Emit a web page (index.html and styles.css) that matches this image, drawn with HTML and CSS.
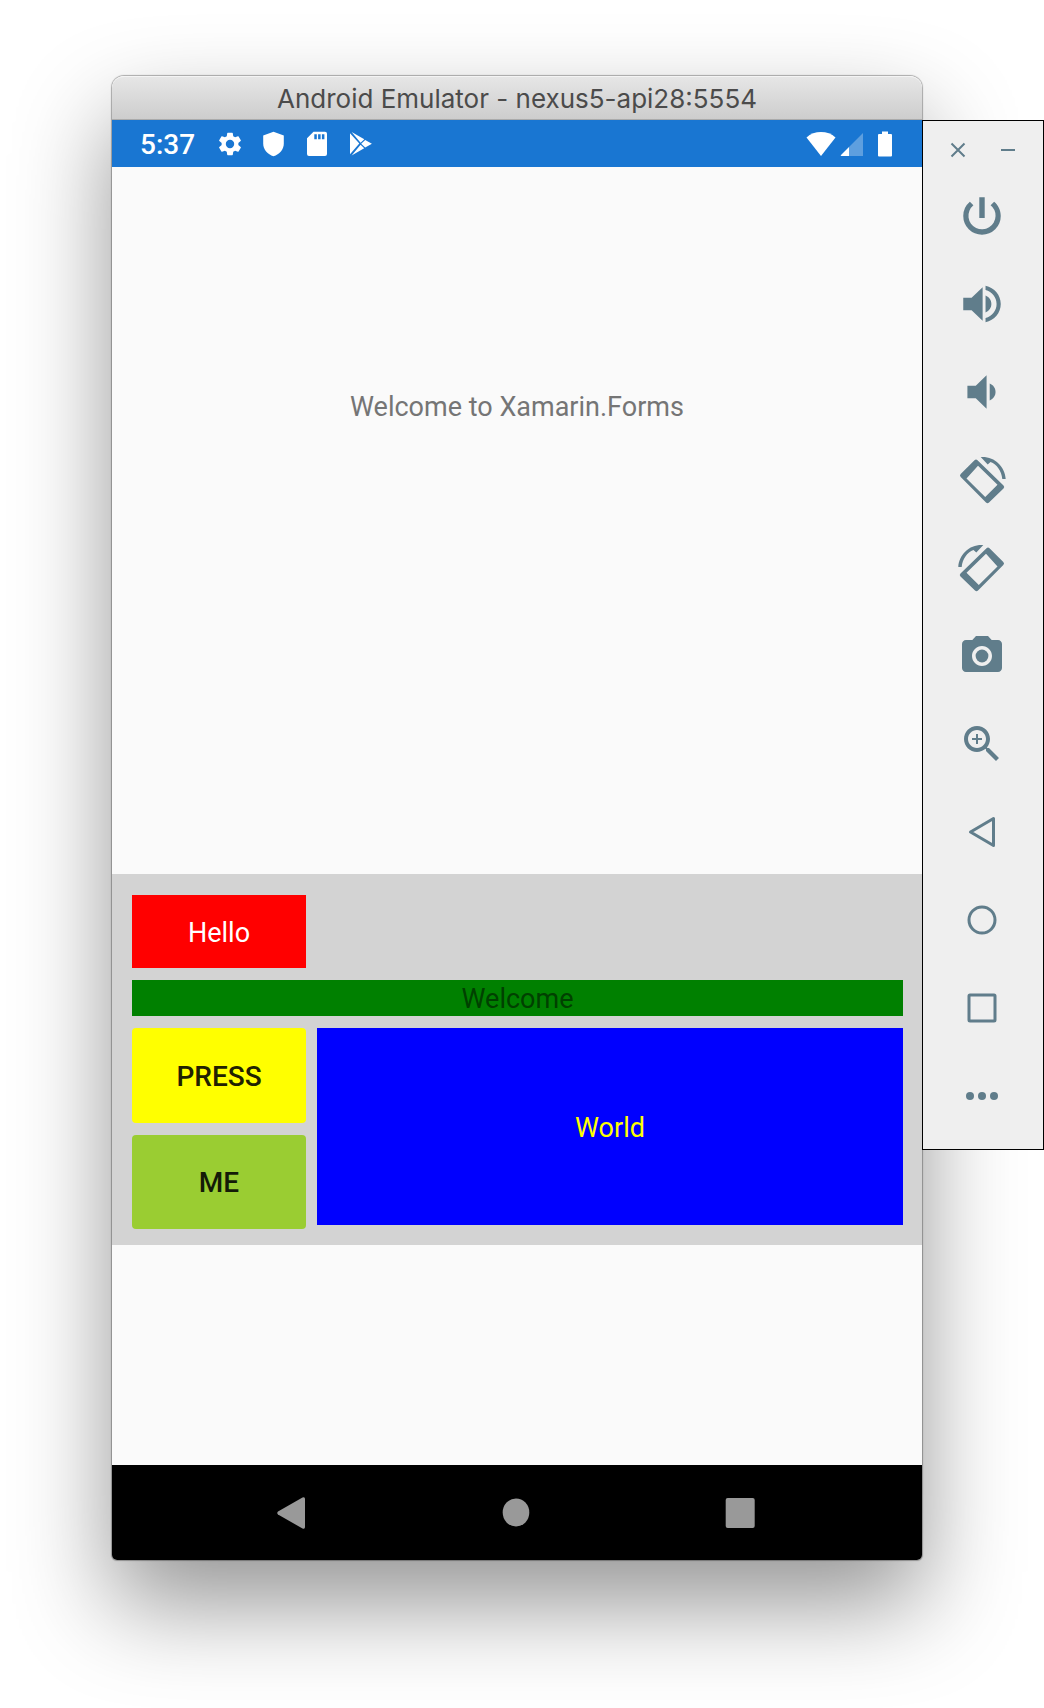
FILE: index.html
```html
<!DOCTYPE html>
<html lang="en">
<head>
<meta charset="utf-8">
<meta name="viewport" content="width=device-width, initial-scale=1">
<title>Android Emulator - nexus5-api28:5554</title>
<link rel="stylesheet" href="styles.css">
</head>
<body>
<main class="stage">
  <section class="window">
    <header class="titlebar"><h1 class="title">Android Emulator - nexus5-api28:5554</h1></header>

    <div class="statusbar">
      <span class="clock">5:37</span>
      <div class="notifications">
        <svg class="status-icon" viewBox="0 0 24 24"><path d="M19.14 12.94c.04-.3.06-.61.06-.94 0-.32-.02-.64-.07-.94l2.03-1.58c.18-.14.23-.41.12-.61l-1.92-3.32c-.12-.22-.37-.29-.59-.22l-2.39.96c-.5-.38-1.03-.7-1.62-.94l-.36-2.54c-.04-.24-.24-.41-.48-.41h-3.84c-.24 0-.43.17-.47.41l-.36 2.54c-.59.24-1.13.57-1.62.94l-2.39-.96c-.22-.08-.47 0-.59.22L2.74 8.87c-.12.21-.08.47.12.61l2.03 1.58c-.05.3-.09.63-.09.94s.02.64.07.94l-2.03 1.58c-.18.14-.23.41-.12.61l1.92 3.32c.12.22.37.29.59.22l2.39-.96c.5.38 1.03.7 1.62.94l.36 2.54c.05.24.24.41.48.41h3.84c.24 0 .44-.17.47-.41l.36-2.54c.59-.24 1.13-.56 1.62-.94l2.39.96c.22.08.47 0 .59-.22l1.92-3.32c.12-.22.07-.47-.12-.61l-2.01-1.58zM12 15.6A3.6 3.6 0 1 1 12 8.4a3.6 3.6 0 0 1 0 7.2z"/></svg>
        <svg class="status-icon" viewBox="0 0 28 28"><path d="M14.500 1.700 24.800 5.500V13.500C24.800 19.500 20.500 24.300 14.500 26.300 8.500 24.300 4.200 19.500 4.200 13.500V5.500Z"/></svg>
        <svg class="status-icon" viewBox="0 0 28 28"><path fill-rule="evenodd" d="M11.500 1.700H23Q25 1.700 25 3.700V24Q25 26 23 26H7Q5 26 5 24V8.200ZM12.300 4.200V9.200H14.800V4.200ZM16.100 4.200V9.200H18.600V4.200ZM19.900 4.200V9.200H22.400V4.200Z"/></svg>
        <svg class="status-icon" viewBox="0 0 28 28"><path d="M5 3.300 14.300 13.600 5 24.200ZM6.600 2 19.300 9.300 15.600 12.800ZM6.600 25.600 15.600 14.800 19.200 18.200ZM20.200 9.900 26.900 13.800 20.200 17.600 16.200 13.800Z"/></svg>
      </div>
      <div class="system">
        <svg class="wifi" viewBox="0 0 30 28"><path d="M15 26 .500 7.500C8 .200 22 .200 29.500 7.500Z"/></svg>
        <svg class="signal" viewBox="0 0 24 28"><path fill-opacity=".3" d="M23 3V26H9V17Z"/><path d="M9 17V26H1.500Q0 26 1 25Z"/></svg>
        <svg class="battery" viewBox="0 0 14 28"><path d="M4 1.500H10V4H13Q14 4 14 5V25.500Q14 26.500 13 26.500H1Q0 26.500 0 25.500V5Q0 4 1 4H4Z"/></svg>
      </div>
    </div>

    <div class="app">
      <p class="greeting">Welcome to Xamarin.Forms</p>
      <div class="panel">
        <p class="cell hello">Hello</p>
        <p class="cell welcome">Welcome</p>
        <button class="cell press" type="button">PRESS</button>
        <button class="cell me" type="button">ME</button>
        <p class="cell world">World</p>
      </div>
    </div>

    <nav class="navbar" aria-label="System navigation">
      <button class="nav-button" type="button" aria-label="Back"><svg viewBox="0 0 32 32"><path d="M25.500 .500Q28 -.500 28 2V30Q28 32.500 25.500 31.500L1 17.500Q-.500 16 1 14.500Z"/></svg></button>
      <button class="nav-button" type="button" aria-label="Home"><svg viewBox="0 0 32 32"><ellipse cx="15" cy="15.500" rx="13.300" ry="14"/></svg></button>
      <button class="nav-button" type="button" aria-label="Overview"><svg viewBox="0 0 32 32"><rect x=".700" y="1" width="29" height="30" rx="2"/></svg></button>
    </nav>
  </section>

  <aside class="toolbar" aria-label="Emulator controls">
    <div class="window-controls">
      <button class="control" type="button" aria-label="Close"><svg viewBox="0 0 16 16"><path class="line thin" d="M1.500 1.500 14.500 14.500M14.500 1.500 1.500 14.500"/></svg></button>
      <button class="control" type="button" aria-label="Minimize"><svg viewBox="0 0 16 16"><path class="line thin" d="M1 8H15"/></svg></button>
    </div>
    <button class="tool" type="button" aria-label="Power"><svg class="large" viewBox="0 0 24 24"><path d="M13.300 3h-2.600v10h2.600V3zm4.530 2.170l-1.700 1.700A6.400 6.400 0 0 1 18.500 12a6.500 6.500 0 1 1-10.630-5.130l-1.700-1.700A8.940 8.940 0 0 0 3 12a9 9 0 0 0 18 0c0-2.740-1.230-5.180-3.170-6.830z"/></svg></button>
    <button class="tool" type="button" aria-label="Volume up"><svg class="large" viewBox="0 0 24 24"><path d="M3 9v6h4l5.300 5V4L7 9H3zm13.500 3c0-1.770-1.020-3.290-2.800-4.030v8.050c1.780-.730 2.800-2.250 2.800-4.020zM13.700 3.230v2.060c3.190.860 5.300 3.540 5.300 6.710s-2.110 5.850-5.300 6.710v2.060c4.310-.910 7.300-4.490 7.300-8.770s-2.990-7.860-7.300-8.770z"/></svg></button>
    <button class="tool" type="button" aria-label="Volume down"><svg class="large" viewBox="0 0 24 24"><path d="M18.500 12c0-1.770-1.020-3.290-2.800-4.030v8.050c1.780-.730 2.800-2.250 2.800-4.020zM5 9v6h4l5.200 5V4L9 9H5z"/></svg></button>
    <button class="tool" type="button" aria-label="Rotate left"><svg viewBox="0 0 48 48"><path fill-rule="evenodd" d="M2.700 18 16.500 4.200Q18 2.700 19.500 4.200L45.500 29.500Q47 31 45.500 32.500L31 46.500Q29.500 48 28 46.500L2.700 21Q1.200 19.500 2.700 18ZM8.500 22.500 27.200 41 39.500 28.700 20 9.800Z"/><path d="M22.700 1C36 0 47 10 47.700 23H44.300C43.500 15 39 8.500 32.500 6L29.700 8.500Z"/></svg></button>
    <button class="tool" type="button" aria-label="Rotate right"><svg viewBox="0 0 48 48"><g transform="translate(48) scale(-1 1)"><path fill-rule="evenodd" d="M2.700 18 16.500 4.200Q18 2.700 19.500 4.200L45.500 29.500Q47 31 45.500 32.500L31 46.500Q29.500 48 28 46.500L2.700 21Q1.200 19.500 2.700 18ZM8.500 22.500 27.200 41 39.500 28.700 20 9.800Z"/><path d="M22.700 1C36 0 47 10 47.700 23H44.300C43.500 15 39 8.500 32.500 6L29.700 8.500Z"/></g></svg></button>
    <button class="tool" type="button" aria-label="Take screenshot"><svg viewBox="0 0 24 24"><circle cx="12" cy="12" r="3.200"/><path d="M9 2L7.170 4H4c-1.100 0-2 .9-2 2v12c0 1.100.9 2 2 2h16c1.100 0 2-.9 2-2V6c0-1.100-.9-2-2-2h-3.170L15 2H9zm3 15c-2.760 0-5-2.240-5-5s2.240-5 5-5 5 2.240 5 5-2.240 5-5 5z"/></svg></button>
    <button class="tool" type="button" aria-label="Zoom"><svg viewBox="0 0 24 24"><path d="M15.500 14h-.79l-.28-.27C15.410 12.590 16 11.110 16 9.500 16 5.910 13.090 3 9.500 3S3 5.910 3 9.500 5.910 16 9.500 16c1.610 0 3.090-.59 4.230-1.570l.27.28v.79l5 4.990L20.490 19l-4.990-5zm-6 0C7.010 14 5 11.990 5 9.500S7.010 5 9.500 5 14 7.010 14 9.500 11.990 14 9.500 14zm2.500-4h-2v2H9v-2H7V9h2V7h1v2h2v1z"/></svg></button>
    <button class="tool" type="button" aria-label="Back"><svg viewBox="0 0 48 48"><path class="line" d="M35.500 10.500V37.500L12.500 24Z"/></svg></button>
    <button class="tool" type="button" aria-label="Home"><svg viewBox="0 0 48 48"><circle class="line" cx="24" cy="24" r="13"/></svg></button>
    <button class="tool" type="button" aria-label="Overview"><svg viewBox="0 0 48 48"><rect class="line" x="11" y="11" width="26" height="26" rx="1"/></svg></button>
    <button class="tool" type="button" aria-label="More"><svg viewBox="0 0 48 48"><circle cx="12" cy="24" r="4"/><circle cx="24" cy="24" r="4"/><circle cx="36" cy="24" r="4"/></svg></button>
  </aside>
</main>
</body>
</html>
```
FILE: styles.css
```css
* {
  box-sizing: border-box;
}

body {
  margin: 0;
  background: #fff;
  font-family: Roboto, "Liberation Sans", sans-serif;
  font-size: 27px;
  line-height: 36px;
}

h1,
p {
  margin: 0;
}

button {
  margin: 0;
  padding: 0;
  border: 0;
  background: none;
  font: inherit;
}

svg {
  display: block;
  fill: currentColor;
}

.stage {
  display: flex;
  align-items: flex-start;
  padding: 76px 0 148px 112px;
  overflow: hidden;
}

/* Emulator window */
.window {
  flex: 1;
  min-width: 0;
  border-radius: 12px 12px 5px 5px;
  box-shadow: 0 0 1px 1px rgba(0, 0, 0, 0.3), 0 44px 96px rgba(0, 0, 0, 0.42);
}

.titlebar {
  padding: 4px 0 3px;
  border-top: 1px solid #f4f4f4;
  border-bottom: 1px solid #aaa;
  border-radius: 12px 12px 0 0;
  background: linear-gradient(#e6e6e6, #cdcdcd);
}

.title {
  color: #4b4b4b;
  font-family: Inter, "Liberation Sans", sans-serif;
  font-size: 26px;
  font-weight: 400;
  line-height: 35px;
  text-align: center;
}

.statusbar {
  display: flex;
  align-items: center;
  height: 47px;
  padding: 0 30px 0 28px;
  background: #1976d2;
  color: #fff;
}

.clock {
  padding-top: 2px;
  font-size: 28px;
  font-weight: 500;
  line-height: 45px;
}

.notifications {
  display: flex;
  gap: 15px;
  margin-left: 21px;
}

.status-icon {
  width: 28px;
  height: 28px;
}

.system {
  display: flex;
  margin-left: auto;
}

.wifi {
  width: 30px;
  height: 28px;
}

.signal {
  width: 24px;
  height: 28px;
  margin: 0 14px 0 4px;
}

.battery {
  width: 14px;
  height: 28px;
}

.app {
  padding-bottom: 220px;
  background: #fafafa;
}

.greeting {
  padding: 222px 0 449px;
  color: #757575;
  text-align: center;
}

.panel {
  display: grid;
  grid-template-columns: 174px 1fr;
  grid-template-rows: 73px 36px 95px 94px;
  gap: 12px 11px;
  padding: 21px 19px 16px 20px;
  background: #d3d3d3;
}

.cell {
  display: flex;
  align-items: center;
  justify-content: center;
  padding-top: 2px;
  line-height: 34px;
}

.hello {
  background: #f00;
  color: #fff;
}

.welcome {
  grid-column: 1 / -1;
  background: #008000;
  color: #004000;
}

.press,
.me {
  grid-column: 1;
  border-radius: 4px;
  font-size: 28px;
  font-weight: 500;
}

.press {
  background: #ff0;
  color: #212100;
}

.me {
  background: #9acd32;
  color: #141b07;
}

.world {
  grid-row: 3 / 5;
  grid-column: 2;
  margin-bottom: 4px;
  background: #00f;
  color: #ff0;
}

.navbar {
  display: flex;
  align-items: center;
  justify-content: center;
  gap: 192px;
  height: 95px;
  border-radius: 0 0 5px 5px;
  background: #000;
}

.nav-button {
  width: 32px;
  color: #999;
}

/* Side toolbar */
.toolbar {
  position: relative;
  flex: none;
  display: flex;
  flex-direction: column;
  width: 122px;
  margin-top: 44px;
  padding: 0 2px 9px 0;
  border: 1px solid #000;
  background: #efefef;
  color: #607d8b;
}

.window-controls {
  display: flex;
  justify-content: center;
  gap: 34px;
  padding: 21px 0 14px 2px;
}

.control {
  width: 16px;
  color: inherit;
}

.tool {
  display: flex;
  align-items: center;
  justify-content: center;
  height: 88px;
  color: inherit;
}

.tool svg {
  width: 48px;
  height: 48px;
}

.tool .large {
  width: 50px;
  height: 50px;
}

.line {
  fill: none;
  stroke: currentColor;
  stroke-width: 3;
  stroke-linejoin: round;
}

.thin {
  stroke-width: 2;
}
```
